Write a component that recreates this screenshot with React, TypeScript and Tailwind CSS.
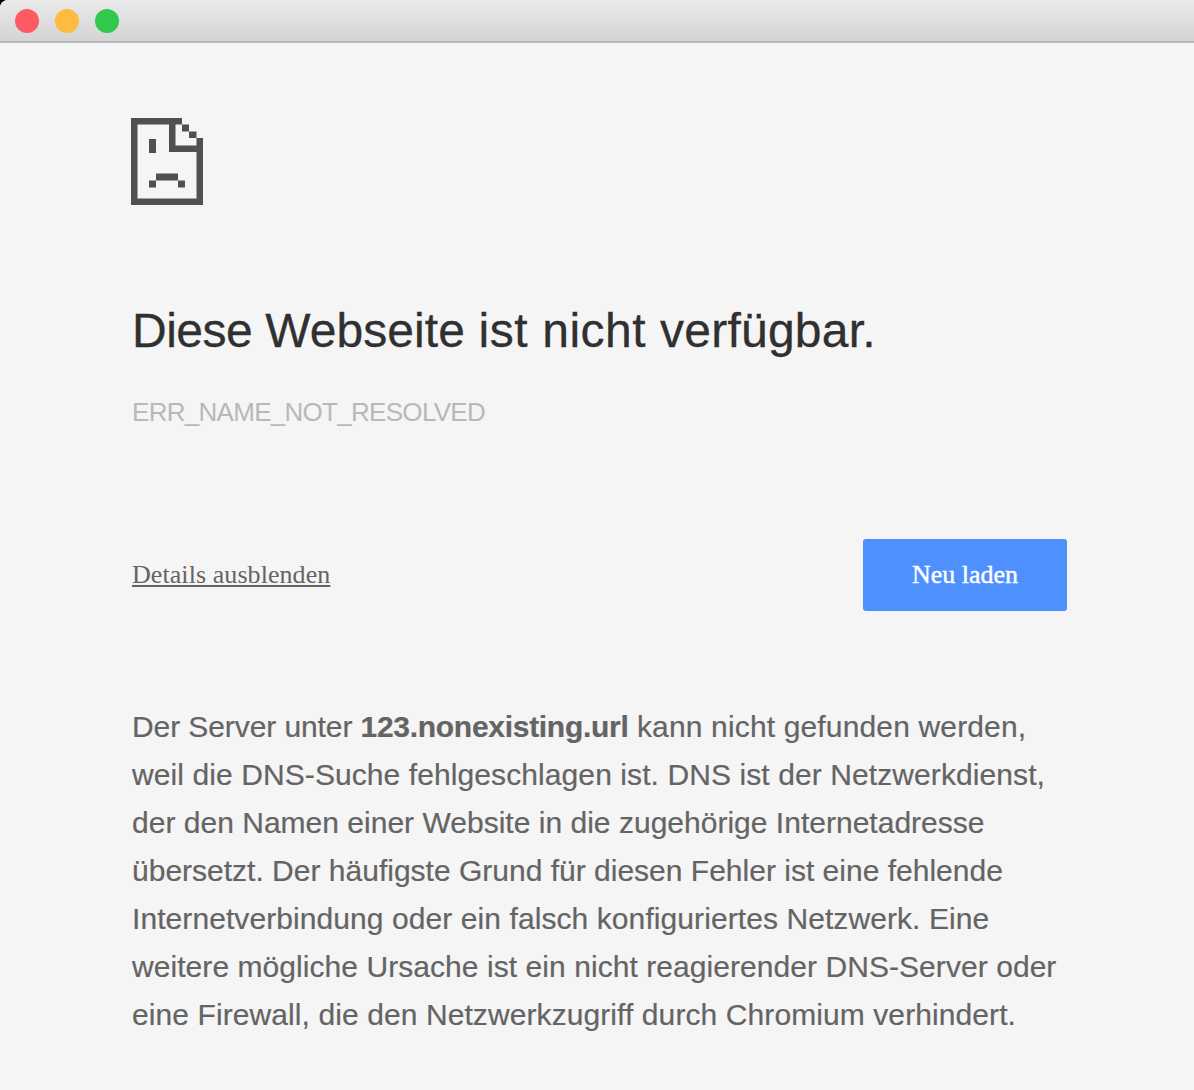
const lines = [
  { text: 'weil die DNS-Suche fehlgeschlagen ist. DNS ist der Netzwerkdienst,', tracking: 'tracking-[0.09px]' },
  { text: 'der den Namen einer Website in die zugehörige Internetadresse', tracking: 'tracking-[0.015px]' },
  { text: 'übersetzt. Der häufigste Grund für diesen Fehler ist eine fehlende', tracking: 'tracking-[0.005px]' },
  { text: 'Internetverbindung oder ein falsch konfiguriertes Netzwerk. Eine', tracking: 'tracking-[0.08px]' },
  { text: 'weitere mögliche Ursache ist ein nicht reagierender DNS-Server oder', tracking: 'tracking-[0.06px]' },
  { text: 'eine Firewall, die den Netzwerkzugriff durch Chromium verhindert.', tracking: 'tracking-[0.09px]' },
];

function SadPage() {
  return (
    <svg className="block h-[87px] w-[72px]" viewBox="0 0 72 87" fill="#505050" aria-hidden="true">
      <path d="M0 0H51V6.5H44.5V27.5H65.5V20H72V87H0ZM6.5 6.5V80.5H65.5V34H38V6.5Z" fillRule="evenodd" />
      <path d="M51 6.5h7v7h-7zM58 13.5h7.5v6.5h-7.5zM18 21h7v14h-7zM25 55.5h22v7H25zM18 62.5h7v7h-7zM47 62.5h7v7h-7z" />
    </svg>
  );
}

export default function App() {
  return (
    <div className="h-[1090px] w-[1194px] overflow-hidden bg-black font-['Liberation_Sans',Arial,sans-serif]">
      <div className="h-full rounded-tl-lg bg-[#f5f5f5]">
        <header className="flex h-[43px] items-center gap-4 rounded-tl-lg border-b-2 border-[#b9b9b9] bg-linear-to-b from-[#eaeaea] to-[#d4d4d4] pl-[15px]">
          <span className="size-6 rounded-full bg-[#fd5b63]" />
          <span className="size-6 rounded-full bg-[#fdbb40]" />
          <span className="size-6 rounded-full bg-[#31c84b]" />
        </header>
        <main className="flex flex-col pt-[75px] pr-[127px] pl-[131px]">
          <SadPage />
          <h1 className="mt-[98px] pl-px text-[48px] leading-[56px] tracking-[0.25px] whitespace-nowrap text-[#303030] [-webkit-text-stroke:0.3px]">
            <span className="tracking-[-0.48px]">Diese </span>
            <span className="tracking-[0.08px]">Webseite </span>
            <span className="tracking-[0.6px]">ist </span>
            <span className="tracking-[0.5px]">nicht </span>
            verfügbar.
          </h1>
          <p className="mt-[37px] pl-px text-[26px] leading-8 tracking-[-0.71px] text-[#b8b8b8]">ERR_NAME_NOT_RESOLVED</p>
          <div className="mt-[111px] flex h-[72px] items-center justify-between pl-px font-['Liberation_Serif','Times_New_Roman',serif] text-[26px]">
            <a href="#details" className="pb-px tracking-[0.07px] text-[#646464] underline">Details ausblenden</a>
            <button className="h-[72px] w-[204px] rounded-[3px] bg-[#4d90fe] pb-px text-white [-webkit-text-stroke:0.4px]">Neu laden</button>
          </div>
          <div className="mt-[92px] pl-px text-[30px] leading-[48px] whitespace-nowrap text-[#646464] [-webkit-text-stroke:0.2px]">
            <p className="tracking-[0.15px]">
              <span className="tracking-[-0.09px]">Der Server unter </span>
              <strong className="tracking-[-0.29px]">123.nonexisting.url</strong> kann nicht gefunden werden,
            </p>
            {lines.map((line) => <p key={line.text} className={line.tracking}>{line.text}</p>)}
          </div>
        </main>
      </div>
    </div>
  );
}
